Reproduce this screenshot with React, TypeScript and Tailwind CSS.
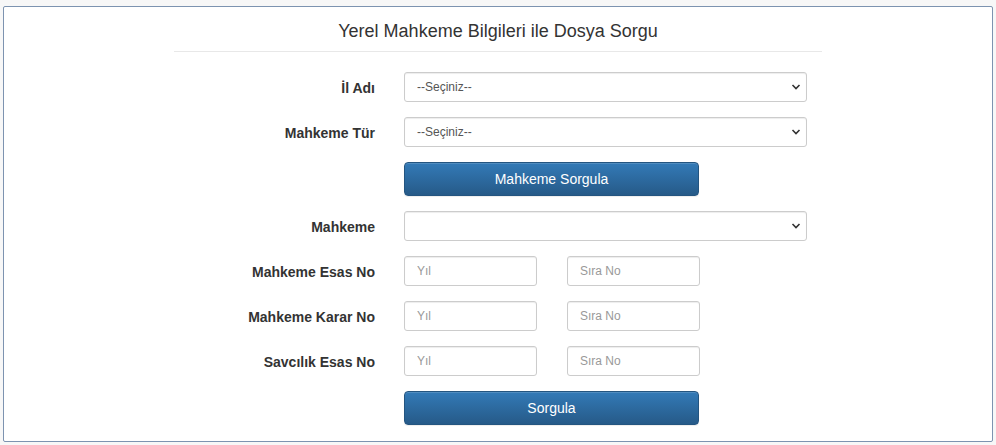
import React from "react"

const font = { fontFamily: '"Liberation Sans", Arial, sans-serif' }

function Chevron() {
  return (
    <svg
      className="pointer-events-none absolute right-[6px] top-1/2 -translate-y-1/2"
      width="10"
      height="7"
      viewBox="0 0 10 7"
      fill="none"
    >
      <path d="M1.5 1.5 L5 5 L8.5 1.5" stroke="#333" strokeWidth="1.6" />
    </svg>
  )
}

function SelectBox({ value }: { value: string }) {
  return (
    <div className="relative h-[30px] w-[403px]">
      <select
        className="h-full w-full appearance-none rounded-[3px] border border-[#cccccc] bg-white pl-[12px] text-[12px] text-[#555] shadow-[inset_0_1px_1px_rgba(0,0,0,0.075)] outline-none"
        defaultValue={value}
      >
        <option value={value}>{value}</option>
      </select>
      <Chevron />
    </div>
  )
}

function TextBox({ placeholder }: { placeholder: string }) {
  return (
    <input
      className="h-[30px] w-[133px] rounded-[3px] border border-[#cccccc] bg-white pl-[12px] text-[12px] text-[#555] shadow-[inset_0_1px_1px_rgba(0,0,0,0.075)] outline-none placeholder:text-[#999]"
      placeholder={placeholder}
    />
  )
}

function Row({ label, children }: { label?: string; children: React.ReactNode }) {
  return (
    <div className="flex items-center">
      <label className="w-[371px] pt-[3px] text-right text-[14px] font-bold text-[#333]">
        {label}
      </label>
      <div className="ml-[29px] flex">{children}</div>
    </div>
  )
}

function PrimaryButton({ text }: { text: string }) {
  return (
    <button className="h-[34px] w-[295px] rounded-[4px] border border-[#245580] bg-[linear-gradient(#337ab7,#265a88)] text-[14px] text-white shadow-[inset_0_1px_0_rgba(255,255,255,0.15),0_1px_1px_rgba(0,0,0,0.075)]">
      {text}
    </button>
  )
}

export default function App() {
  return (
    <div className="h-[445px] w-[996px] bg-[#f7f7f7] pl-[3px] pt-[6px]" style={font}>
      <div className="h-[436px] w-[990px] rounded-[2px] border border-[#7d93b0] bg-white">
        <h3 className="pt-[11px] text-center text-[18px] leading-[26px] text-[#333]">
          Yerel Mahkeme Bilgileri ile Dosya Sorgu
        </h3>
        <div className="mx-auto mt-[7px] h-px w-[648px] bg-[#e8e8e8]" />

        <div className="mt-[20px] flex flex-col gap-[15px]">
          <Row label="İl Adı">
            <SelectBox value="--Seçiniz--" />
          </Row>
          <Row label="Mahkeme Tür">
            <SelectBox value="--Seçiniz--" />
          </Row>
          <Row>
            <PrimaryButton text="Mahkeme Sorgula" />
          </Row>
          <Row label="Mahkeme">
            <SelectBox value="" />
          </Row>
          <Row label="Mahkeme Esas No">
            <div className="flex gap-[30px]">
              <TextBox placeholder="Yıl" />
              <TextBox placeholder="Sıra No" />
            </div>
          </Row>
          <Row label="Mahkeme Karar No">
            <div className="flex gap-[30px]">
              <TextBox placeholder="Yıl" />
              <TextBox placeholder="Sıra No" />
            </div>
          </Row>
          <Row label="Savcılık Esas No">
            <div className="flex gap-[30px]">
              <TextBox placeholder="Yıl" />
              <TextBox placeholder="Sıra No" />
            </div>
          </Row>
          <Row>
            <PrimaryButton text="Sorgula" />
          </Row>
        </div>
      </div>
    </div>
  )
}
